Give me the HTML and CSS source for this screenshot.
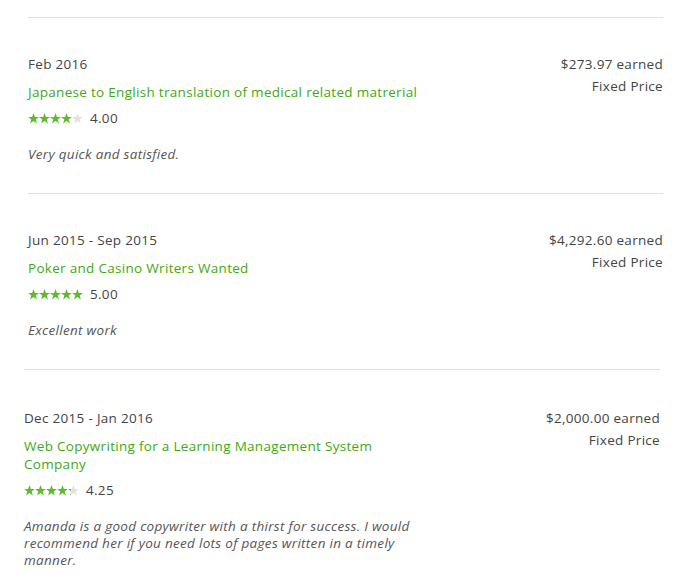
FILE: index.html
```html
<!DOCTYPE html>
<html>
<head>
    <title>Work History</title>
    <link rel="stylesheet" href="styles.css">
</head>
<body>
    <div class="history">
        <div class="job">
            <div class="job-main">
                <div class="date">Feb 2016</div>
                <div class="title">Japanese to English translation of medical related matrerial</div>
                <div class="rating">
                    <svg class="stars" width="56" height="11" viewBox="0 0 56 11">
                        <defs>
                            <polygon id="star" points="5.5,0.1 6.9,4 10.9,4 7.7,6.4 8.9,10.5 5.5,8 2.1,10.5 3.3,6.4 0.1,4 4.1,4"/>
                        </defs>
                        <use href="#star" x="0" fill="#5bbd2e"/>
                        <use href="#star" x="11" fill="#5bbd2e"/>
                        <use href="#star" x="22" fill="#5bbd2e"/>
                        <use href="#star" x="33" fill="#5bbd2e"/>
                        <use href="#star" x="44" fill="#e2e2e2"/>
                    </svg>
                    <span class="score">4.00</span>
                </div>
                <div class="comment">Very quick and satisfied.</div>
            </div>
            <div class="job-side">
                <div class="earned">$273.97 earned</div>
                <div class="kind">Fixed Price</div>
            </div>
        </div>

        <div class="job">
            <div class="job-main">
                <div class="date">Jun 2015 - Sep 2015</div>
                <div class="title">Poker and Casino Writers Wanted</div>
                <div class="rating">
                    <svg class="stars" width="56" height="11" viewBox="0 0 56 11">
                        <use href="#star" x="0" fill="#5bbd2e"/>
                        <use href="#star" x="11" fill="#5bbd2e"/>
                        <use href="#star" x="22" fill="#5bbd2e"/>
                        <use href="#star" x="33" fill="#5bbd2e"/>
                        <use href="#star" x="44" fill="#5bbd2e"/>
                    </svg>
                    <span class="score">5.00</span>
                </div>
                <div class="comment">Excellent work</div>
            </div>
            <div class="job-side">
                <div class="earned">$4,292.60 earned</div>
                <div class="kind">Fixed Price</div>
            </div>
        </div>

        <div class="job job-offset">
            <div class="job-main">
                <div class="date">Dec 2015 - Jan 2016</div>
                <div class="title">Web Copywriting for a Learning Management System Company</div>
                <div class="rating">
                    <svg class="stars" width="56" height="11" viewBox="0 0 56 11">
                        <defs>
                            <linearGradient id="quarter">
                                <stop offset="0.3" stop-color="#5bbd2e"/>
                                <stop offset="0.3" stop-color="#e2e2e2"/>
                            </linearGradient>
                        </defs>
                        <use href="#star" x="0" fill="#5bbd2e"/>
                        <use href="#star" x="11" fill="#5bbd2e"/>
                        <use href="#star" x="22" fill="#5bbd2e"/>
                        <use href="#star" x="33" fill="#5bbd2e"/>
                        <use href="#star" x="44" fill="url(#quarter)"/>
                    </svg>
                    <span class="score">4.25</span>
                </div>
                <div class="comment">Amanda is a good copywriter with a thirst for success. I would recommend her if you need lots of pages written in a timely manner.</div>
            </div>
            <div class="job-side">
                <div class="earned">$2,000.00 earned</div>
                <div class="kind">Fixed Price</div>
            </div>
        </div>
    </div>
</body>
</html>
```

FILE: styles.css
```css
body {
    margin: 0;
    background: #fff;
    font-family: "Open Sans", "Liberation Sans", sans-serif;
    font-size: 13.5px;
    letter-spacing: 0.3px;
    color: #444;
}

.history {
    padding: 17px 37px 0 28px;
}

.job {
    display: flex;
    justify-content: space-between;
    border-top: 1px solid #e0e0e0;
    padding: 37px 0 30px;
}

.job-offset {
    margin: 0 3px 0 -4px;
    padding-top: 39px;
}

.job-main {
    width: 412px;
}

.date {
    line-height: 18px;
}

.title {
    margin-top: 10px;
    line-height: 18px;
    color: #3fa814;
}

.rating {
    display: flex;
    align-items: center;
    margin-top: 8px;
    height: 18px;
}

.stars {
    display: block;
    margin-right: 6px;
}

.score {
    line-height: 18px;
}

.comment {
    margin-top: 19px;
    line-height: 17px;
    font-style: italic;
    color: #555;
}

.job-side {
    text-align: right;
}

.earned {
    line-height: 18px;
}

.kind {
    margin-top: 4px;
    line-height: 18px;
}
```
